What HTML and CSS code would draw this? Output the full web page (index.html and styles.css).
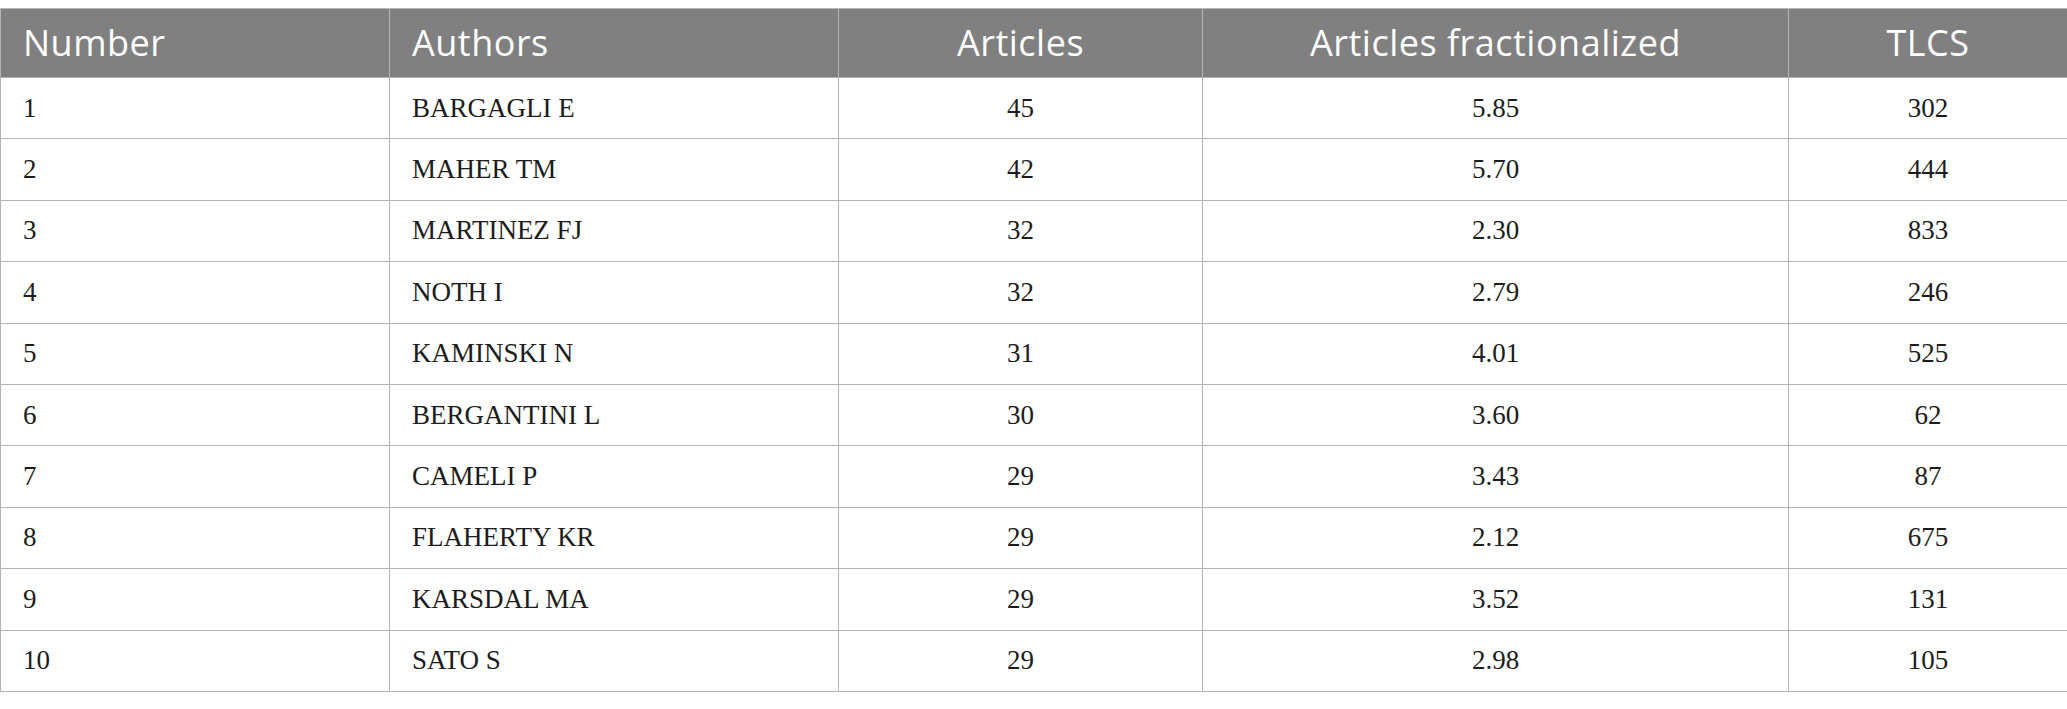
FILE: index.html
```html
<!DOCTYPE html>
<html>
<head>
<meta charset="utf-8">
<link rel="stylesheet" href="styles.css">
</head>
<body>
<table class="data">
  <colgroup>
    <col class="c-num">
    <col class="c-auth">
    <col class="c-art">
    <col class="c-frac">
    <col class="c-tlcs">
  </colgroup>
  <thead>
    <tr>
      <th class="left">Number</th>
      <th class="left">Authors</th>
      <th>Articles</th>
      <th>Articles fractionalized</th>
      <th>TLCS</th>
    </tr>
  </thead>
  <tbody>
    <tr><td class="left">1</td><td class="left">BARGAGLI E</td><td>45</td><td>5.85</td><td>302</td></tr>
    <tr><td class="left">2</td><td class="left">MAHER TM</td><td>42</td><td>5.70</td><td>444</td></tr>
    <tr><td class="left">3</td><td class="left">MARTINEZ FJ</td><td>32</td><td>2.30</td><td>833</td></tr>
    <tr><td class="left">4</td><td class="left">NOTH I</td><td>32</td><td>2.79</td><td>246</td></tr>
    <tr><td class="left">5</td><td class="left">KAMINSKI N</td><td>31</td><td>4.01</td><td>525</td></tr>
    <tr><td class="left">6</td><td class="left">BERGANTINI L</td><td>30</td><td>3.60</td><td>62</td></tr>
    <tr><td class="left">7</td><td class="left">CAMELI P</td><td>29</td><td>3.43</td><td>87</td></tr>
    <tr><td class="left">8</td><td class="left">FLAHERTY KR</td><td>29</td><td>2.12</td><td>675</td></tr>
    <tr><td class="left">9</td><td class="left">KARSDAL MA</td><td>29</td><td>3.52</td><td>131</td></tr>
    <tr><td class="left">10</td><td class="left">SATO S</td><td>29</td><td>2.98</td><td>105</td></tr>
  </tbody>
</table>
</body>
</html>
```
FILE: styles.css
```css
html, body {
  margin: 0;
  padding: 0;
  background: #ffffff;
}

body {
  padding-top: 8px;
}

.data {
  border-collapse: collapse;
  table-layout: fixed;
  width: 2067px;
}

.c-num { width: 389px; }
.c-auth { width: 449px; }
.c-art { width: 364px; }
.c-frac { width: 586px; }
.c-tlcs { width: 279px; }

.data th,
.data td {
  border: 1px solid #b4b4b4;
  padding: 0 22px;
  text-align: center;
  vertical-align: middle;
  white-space: nowrap;
}

.data th {
  background: #7f807f;
  color: #ffffff;
  font-family: "Open Sans", "Noto Sans", sans-serif;
  font-weight: 400;
  font-size: 36px;
  letter-spacing: 0.5px;
  line-height: 44px;
  height: 68px;
}

.data td {
  color: #1c1c1c;
  font-family: "Liberation Serif", "Times New Roman", serif;
  font-size: 27px;
  height: 60.4px;
}

.data .left {
  text-align: left;
}
```
